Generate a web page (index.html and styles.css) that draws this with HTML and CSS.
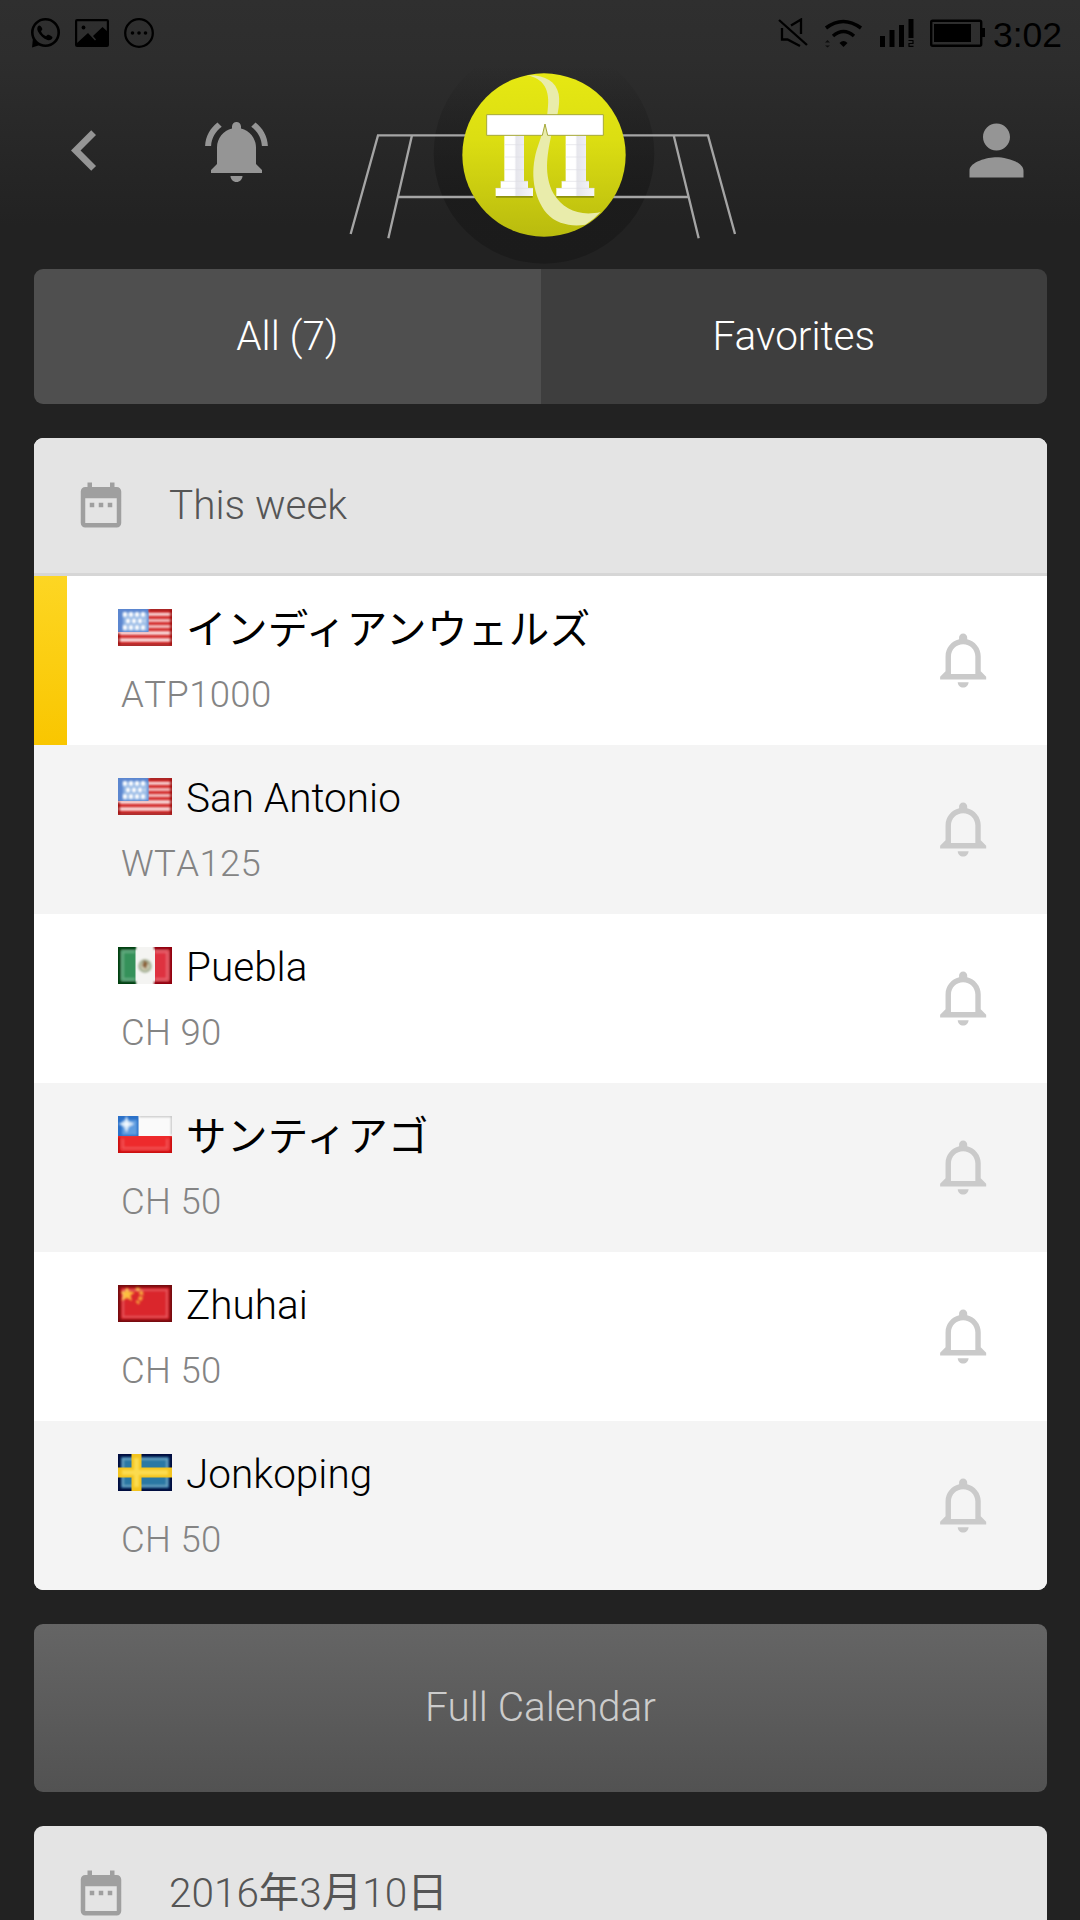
FILE: index.html
```html
<!DOCTYPE html>
<html lang="en">

<head>
    <meta charset="UTF-8">
    <meta name="viewport" content="width=device-width, initial-scale=1.0">
    <title>Tennis Temple - Tournaments</title>
    <link rel="stylesheet" href="styles.css">
</head>

<body>
    <!-- shared icons -->
    <svg class="defs" width="0" height="0">
        <defs>
            <symbol id="bell" viewBox="0 0 24 24">
                <path d="M11.5 22c1.1 0 2-.9 2-2h-4c0 1.1.9 2 2 2zm6.5-6v-5.5c0-3.07-2.13-5.64-5-6.32V3.5c0-.83-.67-1.5-1.5-1.5S10 2.67 10 3.5v.68c-2.87.68-5 3.25-5 6.32V16l-2 2v1h17v-1l-2-2zm-2 1H7v-6.5C7 8.01 9.01 6 11.5 6S16 8.01 16 10.5V17z"/>
            </symbol>
            <symbol id="calendar" viewBox="0 0 24 24">
                <path d="M9 11H7v2h2v-2zm4 0h-2v2h2v-2zm4 0h-2v2h2v-2zm2-7h-1V2h-2v2H8V2H6v2H5c-1.11 0-1.99.9-1.99 2L3 20c0 1.1.89 2 2 2h14c1.1 0 2-.9 2-2V6c0-1.1-.9-2-2-2zm0 16H5V9h14v11z"/>
            </symbol>
            <filter id="soft" x="-20%" y="-20%" width="140%" height="140%"><feGaussianBlur stdDeviation="1"/></filter>
            <symbol id="gloss" viewBox="0 0 54 37">
                <rect width="54" height="37" fill="none" stroke="#200" stroke-opacity=".55" stroke-width="5" filter="url(#soft)"/>
                <rect x="5" y="5" width="44" height="27" fill="#fff" fill-opacity=".06" stroke="#fff" stroke-opacity=".25" stroke-width="2" filter="url(#soft)"/>
            </symbol>
            <symbol id="flag-us" viewBox="0 0 54 37">
                <rect width="54" height="37" fill="#fbe3e3"/>
                <g filter="url(#soft)">
                    <path d="M-3 2h60M-3 8.500h60M-3 14.500h60M-3 20.500h60M-3 27.500h60M-3 34.500h60" stroke="#d22525" stroke-width="3.400"/>
                </g>
                <rect width="30.500" height="23" fill="#5b86cf"/>
                <rect x="5" y="4" width="25" height="18" fill="#8eb3e3" filter="url(#soft)"/>
                <g filter="url(#soft)">
                    <path d="M5 5.500h24M8 12h19M5 18.500h24" stroke="#fff" stroke-width="4.400" stroke-dasharray="4 2"/>
                    <path d="M31 0h23v37H0V24" fill="none" stroke="#900000" stroke-opacity=".75" stroke-width="4"/>
                </g>
            </symbol>
            <symbol id="flag-mx" viewBox="0 0 54 37">
                <rect width="54" height="37" fill="#f4f4f2"/>
                <rect width="17.500" height="37" fill="#35915a"/>
                <rect x="37" width="17" height="37" fill="#de3240"/>
                <g filter="url(#soft)">
                    <circle cx="27" cy="19" r="5.500" fill="#d5d2b8" stroke="#a5b094" stroke-width="2.500"/>
                    <path d="M26 13l4 3-2 6-4-3z" fill="#8a6238"/>
                    <path d="M18 0H0v37h18" fill="none" stroke="#003c0c" stroke-width="5"/>
                    <path d="M36 0h18v37H36" stroke="#8e0008" stroke-width="5" fill="none"/>
                    <path d="M17 5H5v27h12M37 5h12v27H37" stroke="#fff" stroke-opacity=".25" stroke-width="2" fill="none"/>
                </g>
            </symbol>
            <symbol id="flag-cl" viewBox="0 0 54 37">
                <rect width="54" height="37" fill="#fafafa"/>
                <rect y="20" width="54" height="17" fill="#ee2a2c"/>
                <rect width="20.500" height="20" fill="#2a70c8"/>
                <g filter="url(#soft)">
                    <rect x="4" y="4" width="15" height="15" fill="#5e9de0"/>
                    <path d="M8.500 2.500l1.500 4 4 1.500-4 2-1.500 4-1.500-4-4-2 4-1.500z" fill="#fff" stroke="#d8eafa" stroke-width="2"/>
                    <path d="M0 21v16h54V21" stroke="#b80000" stroke-opacity=".7" stroke-width="4" fill="none"/>
                    <path d="M5 23v9h44v-9" stroke="#fff" stroke-opacity=".2" stroke-width="2" fill="none"/>
                    <path d="M21 0h33v19" stroke="#bbb" stroke-width="2" fill="none"/>
                </g>
            </symbol>
            <symbol id="flag-cn" viewBox="0 0 54 37">
                <rect width="54" height="37" fill="#d8181f"/>
                <g filter="url(#soft)">
                    <path d="M9 4l1.500 3 4 1-3 2 1 4-3.500-2-4 2 1-4-2-2.500 3.500-.5z" fill="#fcc032" stroke="#fcb030" stroke-width="2"/>
                    <path d="M18 3q6 3 5.500 7t-4.500 8" fill="none" stroke="#f5a030" stroke-width="4" stroke-dasharray="4 1.500"/>
                </g>
                <use href="#gloss"/>
            </symbol>
            <symbol id="flag-se" viewBox="0 0 54 37">
                <rect width="54" height="37" fill="#2a78a4"/>
                <rect width="54" height="37" fill="none" stroke="#000c40" stroke-width="6" filter="url(#soft)"/>
                <rect x="5" y="5" width="44" height="27" fill="none" stroke="#fff" stroke-opacity=".3" stroke-width="2" filter="url(#soft)"/>
                <path d="M18.500 0v37M0 18.500h54" stroke="#f3c41e" stroke-width="10"/>
                <path d="M18.500 4v29M4 18.500h46" stroke="#fbdb50" stroke-width="5" filter="url(#soft)"/>
            </symbol>
        </defs>
    </svg>

    <div class="status-bar">
        <div class="status-left">
            <svg width="30" height="30" viewBox="0 0 30 30">
                <circle cx="15.500" cy="14.500" r="13.200" fill="none" stroke="#000" stroke-width="2.600"/>
                <path d="M3 20l-1 9.500 8-2.500z"/>
                <path d="M9 7.500c-2 1.200-2.200 3.500-1 6 2 4 5.500 7.300 9.500 8.500 2.300.7 4.500-.2 5-2.500.2-1-4-3.200-4.800-2.700l-1.700 1.500c-2.500-1-4.200-2.800-5-5l1.300-1.800C12.700 10.500 10.500 7 9 7.500z"/>
            </svg>
            <svg width="34" height="28" viewBox="0 0 34 28">
                <rect x="1.100" y="1.100" width="31.800" height="25.800" rx="1" fill="none" stroke="#000" stroke-width="2.200"/>
                <circle cx="8.500" cy="8.500" r="1.900"/>
                <path d="M2 26v-2l11-10 7 7.500 1-1-3-3.500 9.500-9L33 13v13z"/>
            </svg>
            <svg width="30" height="30" viewBox="0 0 30 30">
                <circle cx="15" cy="15" r="13.800" fill="none" stroke="#000" stroke-width="2.300"/>
                <circle cx="8.500" cy="15" r="1.800"/><circle cx="15" cy="15" r="1.800"/><circle cx="21.500" cy="15" r="1.800"/>
            </svg>
        </div>
        <div class="status-right">
            <svg class="mute" width="30" height="30" viewBox="0 0 30 30" fill="none" stroke="#000" stroke-width="2.300">
                <path d="M1 2l28 25M13 7.500l10-6V16M4 10v11.500h5.500L22 28"/>
            </svg>
            <svg class="wifi" width="40" height="29" viewBox="0 0 40 29">
                <path d="M2 9q17-13 35 0M9 17q10.500-9 21 0" fill="none" stroke="#000" stroke-width="3.600"/>
                <path d="M15.500 24q4-4 8 0l-4 4z"/>
                <path d="M1 23.500l2.500-2.500L6 23.500zM1 26.500h5L3.500 28.500z" opacity=".7"/>
            </svg>
            <svg class="signal" width="34" height="28" viewBox="0 0 34 28">
                <path d="M0 17h5v11H0zM9.500 11h5v17h-5zM19 6h5v22h-5zM28.500 0h5v19h-5z"/>
                <path d="M28.500 21.500h5M33 22v2.500h-4v3M28.500 27.300h5" fill="none" stroke="#000" stroke-width="1.200"/>
            </svg>
            <svg class="battery" width="55" height="28" viewBox="0 0 55 28">
                <rect x="1.200" y="1.700" width="50" height="25" rx="1.500" fill="none" stroke="#000" stroke-width="2.400"/>
                <path d="M4 5h37v18H4zM52 9h3v9h-3z"/>
            </svg>
            <span class="time">3:02</span>
        </div>
    </div>

    <header class="top-nav">
        <svg class="icon-back" viewBox="0 0 24 24"><path d="M15.410 7.410L14 6l-6 6 6 6 1.410-1.410L10.830 12z"/></svg>
        <svg class="icon-alerts" viewBox="0 0 24 24"><path d="M6.580 3.580L5.150 2.150C2.760 3.970 1.180 6.800 1.030 10h2c.15-2.650 1.510-4.970 3.550-6.420zM19.970 10h2c-.15-3.200-1.730-6.030-4.130-7.850l-1.430 1.430c2.040 1.450 3.400 3.770 3.560 6.420zm-1.970.5c0-3.070-2.130-5.640-5-6.320V3.500c0-.83-.67-1.500-1.500-1.500S10 2.670 10 3.500v.68c-2.870.68-5 3.250-5 6.320V16l-2 2v1h17v-1l-2-2zM11.500 22c1.100 0 2-.9 2-2h-4c0 1.100.9 2 2 2z"/></svg>
        <svg class="logo" viewBox="0 0 1290 657">
            <defs>
                <linearGradient id="ball" x1="0" y1="0" x2="0" y2="1">
                    <stop offset="0" stop-color="#e6e812"/>
                    <stop offset=".4" stop-color="#dcde12"/>
                    <stop offset="1" stop-color="#b9bb0e"/>
                </linearGradient>
                <linearGradient id="halo" x1="0" y1="0" x2="0" y2="1">
                    <stop offset=".1" stop-color="#1a1a1a" stop-opacity="0"/>
                    <stop offset=".65" stop-color="#1a1a1a" stop-opacity=".8"/>
                    <stop offset="1" stop-color="#1b1b1b"/>
                </linearGradient>
                <linearGradient id="column" x1="0" y1="0" x2="1" y2="0">
                    <stop offset=".5" stop-color="#fff"/>
                    <stop offset=".55" stop-color="#e6e6ec"/>
                    <stop offset="1" stop-color="#f6f6f8"/>
                </linearGradient>
            </defs>
            <circle cx="642" cy="310" r="331" fill="url(#halo)"/>
            <!-- court lines -->
            <path d="M62 552L144 256H1134L1215 552M175 565L246 256M1031 256L1106 565M205 441H1076" fill="none" stroke="#a5a5a5" stroke-width="7"/>
            <circle cx="642" cy="315" r="245" fill="url(#ball)"/>
            <path d="M590 76C640 84 662 120 653 180L650 210L620 300C600 370 610 440 650 490C680 525 730 530 766 524Q792 508 812 486C750 500 700 480 670 430C642 375 650 320 664 255C680 210 692 165 686 132C678 92 640 73 590 76z" fill="#e9ecab"/>
            <!-- temple columns -->
            <path d="M498 440h110M680 440h112" stroke="#8f920e" stroke-width="6"/>
            <path d="M523 256h59v138h12v20h15v24H497v-24h15v-20h11z" fill="url(#column)"/>
            <path d="M707 256h61v138h9v20h16v24H679v-24h16v-20h12z" fill="url(#column)"/>
            <path d="M523 284h59M523 321h59M523 359h59M707 284h61M707 321h61M707 359h61M512 394h82M497 415h112M695 394h82M679 415h114" stroke="#dedee4" stroke-width="2"/>
            <path d="M470 194H820V256H653L645 222L637 256H470z" fill="#fff" stroke="#a5a83c" stroke-width="3"/>
        </svg>
        <svg class="icon-user" viewBox="0 0 24 24"><path d="M12 12c2.210 0 4-1.790 4-4s-1.790-4-4-4-4 1.790-4 4 1.790 4 4 4zm0 2c-2.670 0-8 1.340-8 4v2h16v-2c0-2.660-5.330-4-8-4z"/></svg>
    </header>

    <main class="content">
        <div class="tabs">
            <div class="tab active">All (7)</div>
            <div class="tab">Favorites</div>
        </div>

        <section class="card">
            <div class="card-header"><svg class="icon-calendar"><use href="#calendar"/></svg>This week</div>
            <div class="row highlight">
                <div class="info">
                    <div class="name"><svg class="flag"><use href="#flag-us"/></svg><span>インディアンウェルズ</span></div>
                    <div class="category">ATP1000</div>
                </div>
                <svg class="icon-bell"><use href="#bell"/></svg>
            </div>
            <div class="row">
                <div class="info">
                    <div class="name"><svg class="flag"><use href="#flag-us"/></svg>San Antonio</div>
                    <div class="category">WTA125</div>
                </div>
                <svg class="icon-bell"><use href="#bell"/></svg>
            </div>
            <div class="row">
                <div class="info">
                    <div class="name"><svg class="flag"><use href="#flag-mx"/></svg>Puebla</div>
                    <div class="category">CH 90</div>
                </div>
                <svg class="icon-bell"><use href="#bell"/></svg>
            </div>
            <div class="row">
                <div class="info">
                    <div class="name"><svg class="flag"><use href="#flag-cl"/></svg><span>サンティアゴ</span></div>
                    <div class="category">CH 50</div>
                </div>
                <svg class="icon-bell"><use href="#bell"/></svg>
            </div>
            <div class="row">
                <div class="info">
                    <div class="name"><svg class="flag"><use href="#flag-cn"/></svg>Zhuhai</div>
                    <div class="category">CH 50</div>
                </div>
                <svg class="icon-bell"><use href="#bell"/></svg>
            </div>
            <div class="row">
                <div class="info">
                    <div class="name"><svg class="flag"><use href="#flag-se"/></svg>Jonkoping</div>
                    <div class="category">CH 50</div>
                </div>
                <svg class="icon-bell"><use href="#bell"/></svg>
            </div>
        </section>

        <div class="calendar-btn">Full Calendar</div>

        <section class="card">
            <div class="card-header"><svg class="icon-calendar"><use href="#calendar"/></svg><div class="date">2016<span>年</span>3<span>月</span>10<span>日</span></div></div>
        </section>
    </main>
</body>

</html>
```
FILE: styles.css
```css
* {
    box-sizing: border-box;
}

body {
    font-family: Roboto, "Noto Sans CJK JP", sans-serif;
    font-weight: 300;
    font-size: 40.5px;
    background: #222 linear-gradient(#2f2f2f, #2d2d2d 60px, #222 225px) no-repeat;
    margin: 0;
    height: 1920px;
    overflow: hidden;
}

svg {
    display: block;
    flex-shrink: 0;
}

.defs {
    position: absolute;
}

/* status bar */
.status-bar {
    display: flex;
    justify-content: space-between;
    height: 66px;
    padding: 0 18px 0 30px;
}

.status-left,
.status-right {
    display: flex;
    align-items: center;
    height: 66px;
}

.status-left {
    gap: 15px;
}

.wifi {
    margin-left: 16px;
}

.signal {
    margin-left: 16px;
}

.battery {
    margin: 0 8px 0 16px;
}

.time {
    font-family: "Liberation Sans", Arial, sans-serif;
    font-weight: 400;
    font-size: 35.5px;
    line-height: 66px;
    padding-top: 3px;
}

/* header */
.top-nav {
    display: flex;
    align-items: center;
    height: 203px;
    padding: 0 43px 34px 44px;
    fill: #959595;
}

.icon-back,
.icon-user {
    width: 81px;
    height: 81px;
}

.icon-alerts {
    width: 72px;
    height: 72px;
    margin: 3px 0 0 77px;
}

.logo {
    width: 430px;
    height: 219px;
    margin: 18px auto 0 56px;
}

/* content */
.content {
    display: flex;
    flex-direction: column;
    gap: 34px;
    padding: 0 33px 0 34px;
}

.tabs {
    display: flex;
    height: 134.5px;
    border-radius: 9px;
    overflow: hidden;
}

.tab {
    flex: 1;
    background-color: #3e3e3e;
    color: #fff;
    line-height: 135px;
    text-align: center;
}

.tab.active {
    background-color: #4f4f4f;
}

.card {
    border-radius: 9px;
    overflow: hidden;
    background-color: #fff;
}

.card-header {
    display: flex;
    align-items: center;
    height: 138px;
    padding: 0 0 1px 40px;
    background-color: #e4e4e4;
    border-bottom: 3px solid #d6d6d6;
    color: #555;
    line-height: 54px;
}

.date {
    height: 54px;
}

.date span {
    font-weight: 400;
}

.icon-calendar {
    width: 54px;
    height: 54px;
    margin-right: 41px;
    fill: #9f9f9f;
}

.row {
    display: flex;
    align-items: center;
    height: 169px;
    padding: 0 50px 0 84px;
    background-color: #fff;
}

.row:nth-child(odd) {
    background-color: #f4f4f4;
}

.row.highlight {
    background: linear-gradient(#fdd623, #f9c600) no-repeat left / 33px 100%, #fff;
}

.info {
    flex: 1;
    height: 100%;
    padding-top: 26px;
}

.name {
    display: flex;
    align-items: center;
    height: 54px;
    line-height: 54px;
    color: #000;
}

.name span {
    font-weight: 400;
    letter-spacing: 0.4px;
    padding-top: 2px;
}

.flag {
    width: 54px;
    height: 37px;
    margin: 0 14px 2px 0;
}

.category {
    margin: 14.4px 0 0 3px;
    font-size: 36.5px;
    font-kerning: none;
    letter-spacing: 0.35px;
    line-height: 50px;
    color: #848484;
}

.icon-bell {
    width: 65px;
    height: 65px;
    fill: #cacaca;
}

.calendar-btn {
    height: 168px;
    border-radius: 9px;
    background: linear-gradient(#656565, #525252);
    color: #ccc;
    line-height: 167px;
    text-align: center;
}
```
